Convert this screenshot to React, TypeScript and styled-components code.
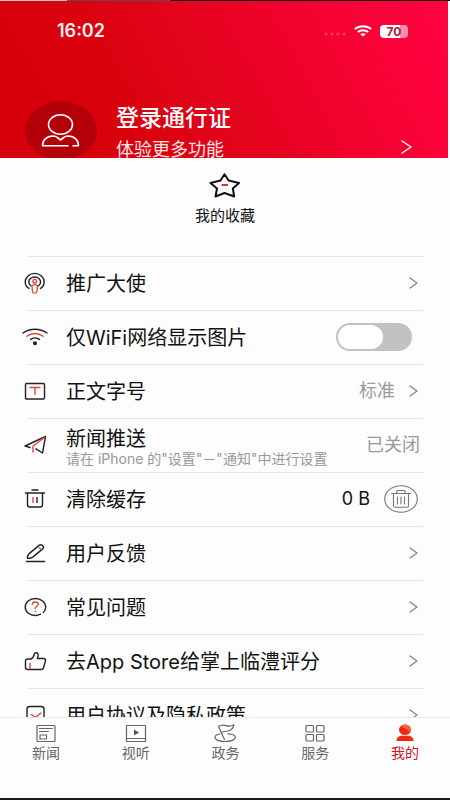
import React from "react";
import styled, { createGlobalStyle, css } from "styled-components";

const GlobalStyle = createGlobalStyle`
  * { box-sizing: border-box; }
  body {
    margin: 0;
    background: #fdfdfd;
    color: #111;
    font-family: Inter, "Noto Sans CJK SC", sans-serif;
  }
  button, input { font: inherit; color: inherit; }
  svg { display: block; flex: none; }
`;

const buttonReset = css`
  border: 0;
  padding: 0;
  background: none;
  cursor: pointer;
`;

const Screen = styled.div`
  display: flex;
  flex-direction: column;
  height: 100vh;
  padding-top: 1px;
  background: linear-gradient(90deg, #c8c4c4 15%, #5a4a4c 15% 38%, #14080a 38%) 0 0 / 100% 1px no-repeat;
  border-bottom: 2px solid #1c1a1a;
`;

const Header = styled.header`
  flex: none;
  margin-right: 2px;
  padding-top: 16px;
  color: #fff;
  background: linear-gradient(
    62deg,
    #d5000b 0%,
    #d9020d 28%,
    #e1041a 45%,
    #ee0229 64%,
    #fa0239 84%,
    #ff0340 100%
  );
`;

const StatusBar = styled.div`
  display: flex;
  align-items: center;
  justify-content: space-between;
  padding: 0 40px 0 57px;
  height: 28px;
`;

const Clock = styled.time`
  font-size: 18px;
  font-weight: 600;
  line-height: 28px;
  color: #ffeef0;
`;

const StatusIcons = styled.div`
  display: flex;
  align-items: center;
  gap: 8px;
`;

const Battery = styled.div`
  width: 28px;
  border-radius: 4px;
  background: linear-gradient(90deg, #fff 70%, #ff8fa8 70%);
  color: #b5163c;
  font-size: 12px;
  font-weight: 700;
  line-height: 13px;
  text-align: center;
`;

const Profile = styled.div`
  display: grid;
  grid-template-columns: 72px 1fr 14px;
  column-gap: 19px;
  align-items: end;
  padding: 56px 33px 0 25px;
`;

const Avatar = styled.button`
  ${buttonReset}
`;

const ProfileText = styled.div`
  align-self: end;
`;

const ProfileTitle = styled.h1`
  margin: 0 0 2px;
  font-size: 23px;
  font-weight: 500;
  line-height: 32px;
`;

const ProfileHint = styled.p`
  margin: 0;
  font-size: 18px;
  line-height: 28px;
  height: 22px;
  color: #ffe4e6;
`;

const ProfileArrow = styled.a`
  color: #fff;
  padding-bottom: 4px;
`;

const Main = styled.main`
  flex: 1;
  min-height: 0;
  overflow: hidden;
`;

const Favorites = styled.button`
  ${buttonReset}
  display: flex;
  flex-direction: column;
  align-items: center;
  width: 100%;
  padding: 15px 0 28px;
  font-size: 15px;
  line-height: 24px;
  gap: 6px;
`;

const List = styled.ul`
  list-style: none;
  margin: 0 27px 0 22px;
  padding: 0;
`;

const Row = styled.li`
  display: grid;
  grid-template-columns: 26px 1fr auto;
  column-gap: 18px;
  align-items: center;
  min-height: 54px;
  background: linear-gradient(#e6e6e6, #e6e6e6) 5px 0 / 100% 1px no-repeat;
`;

const RowText = styled.label`
  padding-top: 2px;
  font-size: 20px;
  line-height: 26px;
  white-space: nowrap;
`;

const RowNote = styled.small`
  display: block;
  font-size: 14px;
  line-height: 14px;
  color: #999;
`;

const RowEnd = styled.span<{ $inset?: number }>`
  display: flex;
  align-items: center;
  gap: 14px;
  padding-right: ${(p) => p.$inset ?? 5}px;
`;

const Value = styled.span<{ $dark?: boolean }>`
  font-size: 18px;
  line-height: 24px;
  color: ${(p) => (p.$dark ? "#111" : "#999")};
`;

const More = styled.a`
  color: #808080;
`;

const Toggle = styled.input`
  appearance: none;
  display: flex;
  margin: 0;
  width: 76px;
  height: 28px;
  padding: 2px;
  border-radius: 14px;
  background: #c2c2c2;
  cursor: pointer;

  &::before {
    content: "";
    width: 45px;
    border-radius: 12px;
    background: #fff;
  }
  &:checked {
    justify-content: flex-end;
    background: #e60012;
  }
`;

const ClearButton = styled.button`
  ${buttonReset}
`;

const TabBar = styled.nav`
  flex: none;
  display: flex;
  padding-left: 1px;
  padding-bottom: 35px;
  border-top: 1px solid #ececec;
  background: #fdfdfd;
`;

const Tab = styled.a<{ $active?: boolean }>`
  flex: 1;
  display: flex;
  flex-direction: column;
  align-items: center;
  padding-top: 5px;
  font-size: 14px;
  line-height: 20px;
  text-decoration: none;
  color: ${(p) => (p.$active ? "#d0142c" : "#666")};
`;

const RED = "#e0483c";

type GlyphProps = {
  w?: number;
  h?: number;
  stroke?: string;
  sw?: number;
  children: React.ReactNode;
};

const Glyph = ({ w = 26, h = 24, stroke = "#222", sw = 1.4, children }: GlyphProps) => (
  <svg
    width={w}
    height={h}
    viewBox={`0 0 ${w} ${h}`}
    fill="none"
    stroke={stroke}
    strokeWidth={sw}
    strokeLinecap="round"
    strokeLinejoin="round"
    aria-hidden="true"
  >
    {children}
  </svg>
);

const Chevron = () => (
  <Glyph w={9} h={12} stroke="currentColor" sw={1.2}>
    <path d="M1 1l7 5-7 5" />
  </Glyph>
);

const Podcast = () => (
  <Glyph>
    <path d="M7 17.400C4.600 16 3.200 13.700 3.200 11 3.200 6.200 7.500 2.400 12.700 2.400s9.500 3.800 9.500 8.600c0 2.700-1.300 5-3.700 6.400" />
    <path d="M8.800 14.800C7.500 13.800 6.800 12.500 6.800 11c0-2.800 2.600-5 5.900-5s5.900 2.200 5.900 5c0 1.500-.7 2.800-2 3.800" />
    <circle cx="12.700" cy="10.200" r="1.800" stroke={RED} />
    <path d="M9.800 14.700c1.600-1.200 4.200-1.200 5.800 0l-.8 6.300c-.2 1.500-4 1.500-4.200 0z" stroke={RED} />
  </Glyph>
);

const Wifi = () => (
  <Glyph>
    <path d="M1 8c7-5 17-5 24 0" />
    <path d="M4.800 11.200c4.800-3.600 11.600-3.600 16.400 0" stroke={RED} />
    <path d="M8.600 14.400c2.500-1.900 6.300-1.900 8.800 0" />
    <circle cx="13" cy="18.300" r="1.300" fill="#222" />
  </Glyph>
);

const FontSize = () => (
  <Glyph>
    <rect x="3.500" y="4.500" width="19" height="15.500" rx="1" />
    <path d="M8 8.500h10M13 8.500v7" stroke={RED} />
  </Glyph>
);

const Plane = () => (
  <Glyph>
    <path d="M8 14.500L3 13 23.500 3.500 20.500 20 14 15.800" />
    <path d="M22.500 4.500L11 13v6" stroke={RED} />
  </Glyph>
);

const Bin = () => (
  <Glyph>
    <path d="M10 3h6M3.500 6h19M5.500 6v11.500c0 1.500.8 2.500 2.500 2.500h10c1.700 0 2.500-1 2.500-2.500V6" />
    <path d="M11 10.500v5" stroke={RED} />
    <path d="M15 10.500v5" />
  </Glyph>
);

const Pencil = () => (
  <Glyph>
    <path d="M5.500 17.300c-.3-1.800 0-3.200 1.300-4.400L17 4.400c2.200-1.600 5.700.8 4 3.200L10.800 16.100c-1.500 1.100-3.300 1.400-5.300 1.200zM4.500 20.500h18" />
    <path d="M17 6.800l2 1.500" stroke={RED} />
  </Glyph>
);

const Question = () => (
  <Glyph>
    <path d="M18.500 19.200C16.900 20 15 20.500 13.300 20.500c-5.700 0-10.100-3.700-10.100-8.500s4.400-8.500 10.100-8.500S23.700 7.200 23.700 12c0 2.100-.9 4-2.300 5.500" />
    <path d="M10.300 9.300c.1-1.600 1.300-2.300 2.900-2.300 1.800 0 3 .8 3 2.200 0 2-2.900 2.100-2.900 4.300" stroke={RED} />
    <circle cx="13.300" cy="16.600" r=".5" fill={RED} stroke={RED} strokeWidth=".6" />
  </Glyph>
);

const Thumb = () => (
  <Glyph>
    <path d="M5.500 10H9c2.200-1 2.900-3.200 3.400-5 .4-1.700 3.300-1.700 3.700.2.300 1.500-.3 3-.8 4.300H21.500c1.700 0 2.400 1 2 2.300l-2 7c-.3 1.100-1 1.700-2.300 1.700H6c-1.600 0-2.500-.7-2.500-1.900v-6.600C3.500 10.700 4 10 5.500 10z" />
    <path d="M8 14.500v5.200" stroke={RED} />
  </Glyph>
);

const Agreement = () => (
  <Glyph>
    <path d="M5 21V6c0-1.800 1-2.500 3-2.500h11c2 0 3 .7 3 2.500v15z" />
    <path d="M9.300 11.500l4 3 5.500-4.500" stroke={RED} />
  </Glyph>
);

const RoundBin = () => (
  <Glyph w={34} h={28} stroke="#777" sw={1.1}>
    <ellipse cx="17" cy="14" rx="16.300" ry="13.300" />
    <path d="M7.500 8.500h19M9.500 8.500V21c0 .8.500 1.200 1.300 1.200h12.400c.8 0 1.300-.4 1.300-1.200V8.500M12.500 8l.8-2.500h7.400l.8 2.500M13.500 12v7M17 12v7M20.500 12v7" />
  </Glyph>
);

const arrow = (
  <More href="#" aria-label="进入">
    <Chevron />
  </More>
);

type Item = {
  icon: React.ReactNode;
  text: string;
  note?: string;
  control?: string;
  end: React.ReactNode;
  inset?: number;
};

const items: Item[] = [
  { icon: <Podcast />, text: "推广大使", end: arrow },
  {
    icon: <Wifi />,
    text: "仅WiFi网络显示图片",
    control: "wifi-only",
    end: <Toggle id="wifi-only" type="checkbox" />,
    inset: 11,
  },
  {
    icon: <FontSize />,
    text: "正文字号",
    end: (
      <>
        <Value>标准</Value>
        {arrow}
      </>
    ),
  },
  {
    icon: <Plane />,
    text: "新闻推送",
    note: '请在 iPhone 的"设置"－"通知"中进行设置',
    end: <Value>已关闭</Value>,
    inset: 3,
  },
  {
    icon: <Bin />,
    text: "清除缓存",
    control: "clear-cache",
    end: (
      <>
        <Value $dark>0 B</Value>
        <ClearButton id="clear-cache" type="button">
          <RoundBin />
        </ClearButton>
      </>
    ),
  },
  { icon: <Pencil />, text: "用户反馈", end: arrow },
  { icon: <Question />, text: "常见问题", end: arrow },
  { icon: <Thumb />, text: "去App Store给掌上临澧评分", end: arrow },
  { icon: <Agreement />, text: "用户协议及隐私政策", end: arrow },
];

const tabs = [
  {
    name: "新闻",
    icon: (
      <Glyph w={24} h={20} stroke="#666" sw={1.2}>
        <rect x="3" y="2.500" width="18" height="16" rx="1" />
        <path d="M5.500 5.500h13M5.500 8.500h9" />
        <rect x="6" y="12" width="6.500" height="4" />
      </Glyph>
    ),
  },
  {
    name: "视听",
    icon: (
      <Glyph w={24} h={20} stroke="#666" sw={1.2}>
        <rect x="2.500" y="2.500" width="19" height="16" />
        <path d="M2.500 15.500h19" />
        <path d="M10 6.500v6l5-3z" fill="#555" stroke="none" />
      </Glyph>
    ),
  },
  {
    name: "政务",
    icon: (
      <Glyph w={24} h={20} stroke="#666" sw={1.2}>
        <path d="M11.500 16.500L5.500 3.500C8 1.600 10.500 1.800 13 2.600c2.700.8 5.200.8 8-.8-.8 3.400-2.800 5.500-6 6.200-2.500.5-4.500 0-6.800 1.500" />
        <path d="M7 11c-3 .4-5 1.500-5 3.200 0 2.600 4.500 4.300 10 4.300s10.300-1.700 10.300-4.300c0-2-3.300-3.200-7.300-3.400" />
      </Glyph>
    ),
  },
  {
    name: "服务",
    icon: (
      <Glyph w={24} h={20} stroke="#666" sw={1.2}>
        <rect x="3" y="2.500" width="7.500" height="6.500" rx="1" />
        <rect x="13.500" y="2.500" width="7.500" height="6.500" rx="1" />
        <rect x="3" y="11.500" width="7.500" height="6.500" rx="1" />
        <rect x="13.500" y="11.500" width="7.500" height="6.500" rx="1" />
      </Glyph>
    ),
  },
  {
    name: "我的",
    active: true,
    icon: (
      <Glyph w={24} h={20} stroke="none">
        <ellipse cx="12" cy="6.800" rx="6" ry="5.300" fill="#ee2a10" />
        <path d="M12 1.500a6 5.300 0 0 1 5.500 7.400L8 3c1-.9 2.400-1.500 4-1.500z" fill="#ff6040" />
        <path d="M3.500 18c0-3 2.200-5.200 5.500-5.200h6c3.300 0 5.500 2.200 5.500 5.200z" fill="#ee2a10" />
      </Glyph>
    ),
  },
];

export default function App() {
  return (
    <>
      <GlobalStyle />
      <Screen>
        <Header>
          <StatusBar>
            <Clock>16:02</Clock>
            <StatusIcons>
              <Glyph w={22} h={12} stroke="none">
                <g fill="#ff4068">
                  <circle cx="2" cy="9" r="1.500" />
                  <circle cx="8" cy="9" r="1.500" />
                  <circle cx="14" cy="9" r="1.500" />
                  <circle cx="20" cy="9" r="1.500" />
                </g>
              </Glyph>
              <Glyph w={18} h={12} stroke="#fff" sw={2}>
                <path d="M.8 4c4.600-3.800 11.800-3.800 16.400 0" strokeLinecap="butt" />
                <path d="M3.800 7c2.900-2.400 7.500-2.400 10.400 0" strokeLinecap="butt" />
                <path d="M6.200 9.200c1.600-1.200 4-1.200 5.600 0L9 11.600z" fill="#fff" stroke="none" />
              </Glyph>
              <Battery>70</Battery>
            </StatusIcons>
          </StatusBar>
          <Profile>
            <Avatar type="button" aria-label="头像">
              <Glyph w={72} h={57} stroke="#fff" sw={1.6}>
                <ellipse cx="36" cy="29.500" rx="36" ry="29.500" fill="#b40008" stroke="none" />
                <ellipse cx="35.500" cy="23.500" rx="12" ry="9.800" />
                <path d="M48 44.800h5.500c0-5.500-4-9.600-10.500-9.800-2 0-3.300.5-4.300 1.500L35.500 39l-3.200-2.500c-1-1-2.300-1.500-4.300-1.500-6.500.2-10.500 4.300-10.500 9.800H43" />
              </Glyph>
            </Avatar>
            <ProfileText>
              <ProfileTitle>登录通行证</ProfileTitle>
              <ProfileHint>体验更多功能</ProfileHint>
            </ProfileText>
            <ProfileArrow href="#" aria-label="登录">
              <Glyph w={11} h={14} stroke="currentColor" sw={1.4}>
                <path d="M1 1l9 6-9 6" />
              </Glyph>
            </ProfileArrow>
          </Profile>
        </Header>
        <Main>
          <Favorites type="button">
            <Glyph w={32} h={25} stroke="#111" sw={2}>
              <path d="M15.500 1.200L19.600 7.500 30 10 23.800 15.500 25.200 23.500 15.500 20 6.500 23.500 8 15.500 1.500 10 11.500 7.500z" />
              <path d="M12.500 12h6.500" stroke="#d8382c" strokeLinecap="butt" />
            </Glyph>
            我的收藏
          </Favorites>
          <List>
            {items.map((item) => (
              <Row key={item.text}>
                {item.icon}
                <RowText htmlFor={item.control}>
                  {item.text}
                  {item.note && <RowNote>{item.note}</RowNote>}
                </RowText>
                <RowEnd $inset={item.inset}>{item.end}</RowEnd>
              </Row>
            ))}
          </List>
        </Main>
        <TabBar>
          {tabs.map((tab) => (
            <Tab key={tab.name} href="#" $active={tab.active}>
              {tab.icon}
              {tab.name}
            </Tab>
          ))}
        </TabBar>
      </Screen>
    </>
  );
}
